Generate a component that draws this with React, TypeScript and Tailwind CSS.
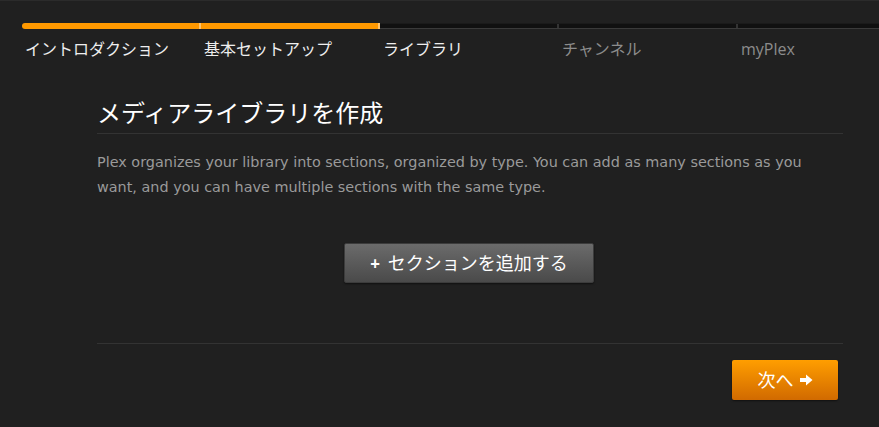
import React from "react";

const font = "font-['Open_Sans','Noto_Sans_CJK_JP',sans-serif]";

const steps = [
  { label: "イントロダクション", done: true },
  { label: "基本セットアップ", done: true },
  { label: "ライブラリ", done: false, current: true },
  { label: "チャンネル", done: false },
  { label: "myPlex", done: false },
];

const Step: React.FC<{ label: string; done: boolean; current?: boolean; first: boolean }> = ({
  label,
  done,
  current,
  first,
}) => {
  return (
    <div className="w-[179px] shrink-0">
      {done ? (
        <div
          className={
            first
              ? "h-[6px] bg-[#ff9900] rounded-l-[3px] border-r-2 border-[#ffc36b]"
              : "h-[6px] bg-[#ff9900] border-r-2 border-[#ffc36b]"
          }
        />
      ) : (
        <div className="h-[6px] flex flex-col">
          <div className="h-px bg-[#1a1a1a]" />
          <div className="flex-1 bg-[#101010] border-r-2 border-[#333333]" />
          <div className="h-px bg-[#3a3a3a]" />
        </div>
      )}
      <div
        className={
          done || current
            ? "pt-[10px] pl-[3px] text-[16px] leading-[20px] text-[#eeeeee]"
            : "pt-[10px] pl-[3px] text-[16px] leading-[20px] text-[#8c8c8c]"
        }
      >
        {label}
      </div>
    </div>
  );
};

export default function App() {
  return (
    <div className={`${font} w-[879px] h-[427px] overflow-hidden bg-[#202020] border-t border-[#2b2b2b]`}>
      <div className="flex w-[922px] pt-[22px] pl-[22px]">
        {steps.map((s, i) => (
          <Step key={s.label} label={s.label} done={s.done} current={s.current} first={i === 0} />
        ))}
      </div>

      <div className="ml-[97px] w-[746px]">
        <h1 className="mt-[38px] pb-[4px] border-b border-[#333333] text-[24px] leading-[32px] text-white">
          メディアライブラリを作成
        </h1>
        <p className="mt-[16px] w-[730px] font-['DejaVu_Sans','Noto_Sans_CJK_JP',sans-serif] text-[14.4px] leading-[25px] text-[#9a9a9a]">
          Plex organizes your library into sections, organized by type. You can add as many sections as you
          want, and you can have multiple sections with the same type.
        </p>

        <div className="mt-[43px] flex justify-center pr-[2px]">
          <button className="w-[250px] h-[40px] rounded-[2px] bg-gradient-to-b from-[#6b6b6b] to-[#4a4a4a] border border-[#3c3c3c] flex items-center justify-center gap-[8px] text-white text-[18px] leading-none shadow-[0_1px_2px_rgba(0,0,0,0.5)]">
            <span className="font-bold text-[17px]">+</span>
            <span>セクションを追加する</span>
          </button>
        </div>

        <div className="mt-[60px] border-t border-[#333333]" />

        <div className="mt-[16px] flex justify-end pr-[5px]">
          <button className="w-[106px] h-[40px] rounded-[2px] bg-gradient-to-b from-[#ff9e00] to-[#d16a00] flex items-center justify-center gap-[6px] text-white text-[18px] leading-none shadow-[0_1px_2px_rgba(0,0,0,0.5)]">
            <span>次へ</span>
            <svg width="13" height="12" viewBox="0 0 13 12" fill="white">
              <path d="M0 4h6V0.5L12.5 6 6 11.5V8H0z" />
            </svg>
          </button>
        </div>
      </div>
    </div>
  );
}
